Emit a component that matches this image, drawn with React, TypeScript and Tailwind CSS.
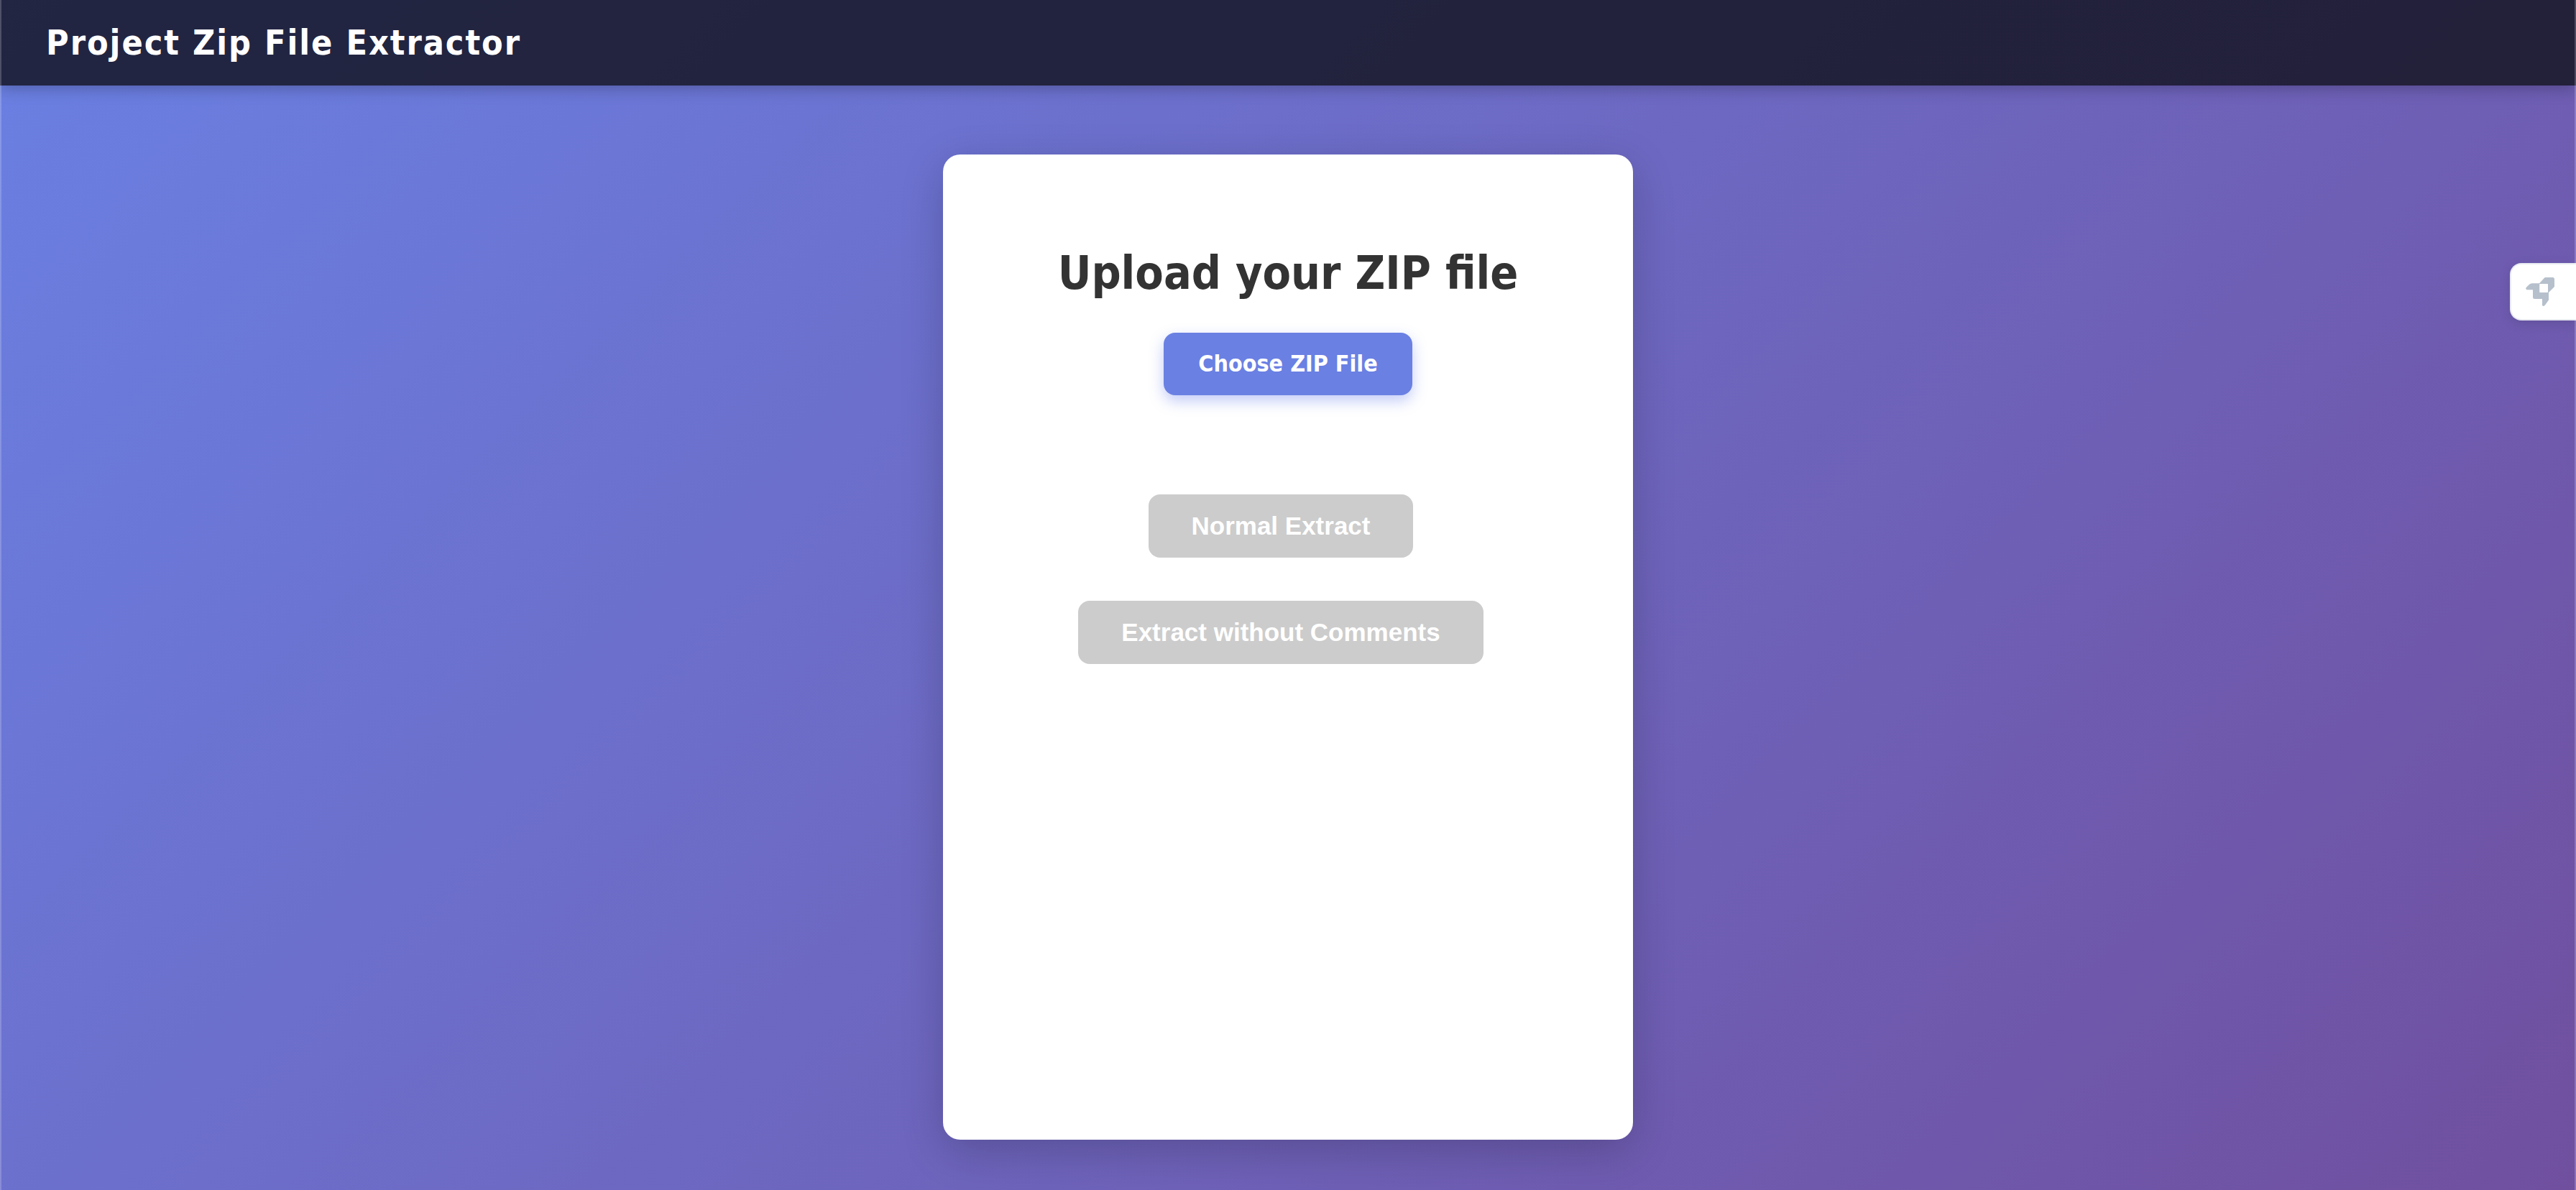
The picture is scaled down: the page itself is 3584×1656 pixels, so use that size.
import React from "react";

function RocketIcon() {
  return (
    <svg viewBox="0 0 40 40" className="size-10 fill-[#b6c0cc]" aria-hidden="true">
      <path d="M27.500 0H37.500Q40 0 40 2.500V13L32 21V31.500L27 38.500Q25 41 23 39V30H12.500Q10 30 10 27.500V17.300H1.800Q-1 16 1 13.700L5 9.700Q6.800 8.200 9 8.200H19L25.500 1.200Q26.500 0 27.500 0ZM20 9Q19.200 9 19.200 9.800V20.200Q19.200 21 20 21H30.200Q31 21 31 20.200V9.800Q31 9 30.200 9Z" fillRule="evenodd" />
    </svg>
  );
}

function ExtractButton({ children }: { children: React.ReactNode }) {
  return (
    <button
      type="button"
      disabled
      className="mr-5 h-[88px] rounded-2xl bg-[#cccccc] px-[60px] font-['Liberation_Sans',Arial,sans-serif] text-[35px] leading-10 font-bold text-white"
    >
      {children}
    </button>
  );
}

export default function App() {
  return (
    <div className="relative flex min-h-screen flex-col bg-[linear-gradient(135deg,#6a80e3_0%,#704f9f_100%)] font-['DejaVu_Sans_Condensed','DejaVu_Sans',sans-serif] [font-stretch:condensed]">
      <header className="bg-[rgba(20,20,34,0.84)] px-16 py-[30px] shadow-[0_4px_20px_rgba(0,0,0,0.25)]">
        <h1 className="text-5xl leading-[59px] font-bold tracking-[2px] text-white">Project Zip File Extractor</h1>
      </header>

      <main className="flex flex-1 flex-col items-center px-10 pt-24 pb-[70px]">
        <section className="flex w-full max-w-[960px] flex-1 flex-col items-center rounded-3xl bg-white px-20 pt-[127px] shadow-[0_16px_60px_rgba(0,0,0,0.2)]">
          <h2 className="text-[64px] leading-[77px] font-bold text-[#333333]">Upload your ZIP file</h2>
          <label className="mt-11 cursor-pointer rounded-2xl bg-[#6a80e3] px-12 py-6 text-[32px] leading-[39px] font-bold text-white shadow-[0_8px_20px_rgba(102,126,234,0.4)]">
            Choose ZIP File
            <input type="file" accept=".zip" className="sr-only" />
          </label>
          <div className="mt-[138px] flex flex-col items-center gap-[60px]">
            <ExtractButton>Normal Extract</ExtractButton>
            <ExtractButton>Extract without Comments</ExtractButton>
          </div>
        </section>
      </main>

      <button
        type="button"
        aria-label="Open launcher"
        className="absolute top-[366px] right-0 flex h-20 w-[92px] items-center rounded-l-2xl border-2 border-r-0 border-[#e8eaf0] bg-white pl-5 shadow-[0_4px_16px_rgba(0,0,0,0.12)]"
      >
        <RocketIcon />
      </button>
      <div className="pointer-events-none absolute inset-0 border-x-2 border-white/20" />
    </div>
  );
}
